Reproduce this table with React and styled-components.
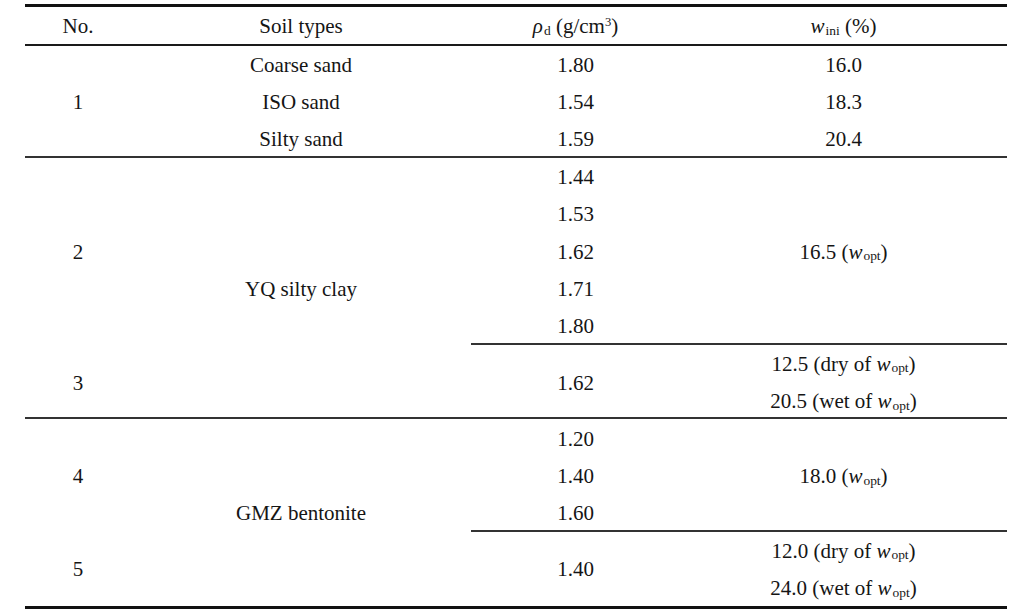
import React from "react";
import styled, { createGlobalStyle } from "styled-components";

const Global = createGlobalStyle`
  html, body { margin: 0; padding: 0; background: #fff; }
  body {
    font-family: "Liberation Serif", "Times New Roman", serif;
    color: #111;
  }
  #root { width: 1024px; height: 612px; overflow: hidden; }
`;

const Page = styled.div`
  padding: 4px 17px 0 25px;
  font-family: "Liberation Serif", "Times New Roman", serif;
`;

const Table = styled.table`
  width: 982px;
  table-layout: fixed;
  border-collapse: separate;
  border-spacing: 0;
  border-top: 3px solid #111;
  border-bottom: 3px solid #111;
  font-family: "Liberation Serif", "Times New Roman", serif;
  font-size: 21px;
  color: #151515;
`;

const HeadRow = styled.tr`
  height: 38.5px;
`;

const Row = styled.tr`
  height: 37.4px;
`;

const Head = styled.th`
  box-sizing: border-box;
  padding: 0;
  font-weight: normal;
  text-align: center;
  vertical-align: middle;
  border-bottom: 2px solid #1a1a1a;
  padding-top: 3px;
`;

const Cell = styled.td`
  box-sizing: border-box;
  padding: 0;
  text-align: center;
  vertical-align: middle;
  line-height: 1;
  border-bottom: ${(p) => (p.$rule ? "2px solid #333" : "0")};
  padding-top: ${(p) => (p.$rule ? "4px" : "2px")};
`;

const Var = styled.i`
  font-style: italic;
`;

const Sub = styled.span`
  font-size: 0.64em;
  position: relative;
  top: 0.12em;
  margin-left: 1px;
`;

const Sup = styled.span`
  font-size: 0.6em;
  position: relative;
  top: -0.55em;
`;

const W = ({ s }) => (
  <>
    <Var>w</Var>
    <Sub>{s}</Sub>
  </>
);

export default function App() {
  return (
    <Page>
      <Global />
      <Table>
        <colgroup>
          <col style={{ width: 106 }} />
          <col style={{ width: 340 }} />
          <col style={{ width: 209 }} />
          <col style={{ width: 327 }} />
        </colgroup>
        <thead>
          <HeadRow>
            <Head>No.</Head>
            <Head>Soil types</Head>
            <Head>
              <Var>ρ</Var>
              <Sub>d</Sub> (g/cm<Sup>3</Sup>)
            </Head>
            <Head>
              <W s="ini" /> (%)
            </Head>
          </HeadRow>
        </thead>
        <tbody>
          <Row>
            <Cell rowSpan={3} $rule>1</Cell>
            <Cell>Coarse sand</Cell>
            <Cell>1.80</Cell>
            <Cell>16.0</Cell>
          </Row>
          <Row>
            <Cell>ISO sand</Cell>
            <Cell>1.54</Cell>
            <Cell>18.3</Cell>
          </Row>
          <Row>
            <Cell $rule>Silty sand</Cell>
            <Cell $rule>1.59</Cell>
            <Cell $rule>20.4</Cell>
          </Row>

          <Row>
            <Cell rowSpan={5}>2</Cell>
            <Cell rowSpan={7} $rule>YQ silty clay</Cell>
            <Cell>1.44</Cell>
            <Cell rowSpan={5} $rule>
              16.5 (<W s="opt" />)
            </Cell>
          </Row>
          <Row>
            <Cell>1.53</Cell>
          </Row>
          <Row>
            <Cell>1.62</Cell>
          </Row>
          <Row>
            <Cell>1.71</Cell>
          </Row>
          <Row>
            <Cell $rule>1.80</Cell>
          </Row>

          <Row>
            <Cell rowSpan={2} $rule>3</Cell>
            <Cell rowSpan={2} $rule>1.62</Cell>
            <Cell>
              12.5 (dry of <W s="opt" />)
            </Cell>
          </Row>
          <Row>
            <Cell $rule>
              20.5 (wet of <W s="opt" />)
            </Cell>
          </Row>

          <Row>
            <Cell rowSpan={3}>4</Cell>
            <Cell rowSpan={5}>GMZ bentonite</Cell>
            <Cell>1.20</Cell>
            <Cell rowSpan={3} $rule>
              18.0 (<W s="opt" />)
            </Cell>
          </Row>
          <Row>
            <Cell>1.40</Cell>
          </Row>
          <Row>
            <Cell $rule>1.60</Cell>
          </Row>

          <Row>
            <Cell rowSpan={2}>5</Cell>
            <Cell rowSpan={2}>1.40</Cell>
            <Cell>
              12.0 (dry of <W s="opt" />)
            </Cell>
          </Row>
          <Row>
            <Cell>
              24.0 (wet of <W s="opt" />)
            </Cell>
          </Row>
        </tbody>
      </Table>
    </Page>
  );
}
